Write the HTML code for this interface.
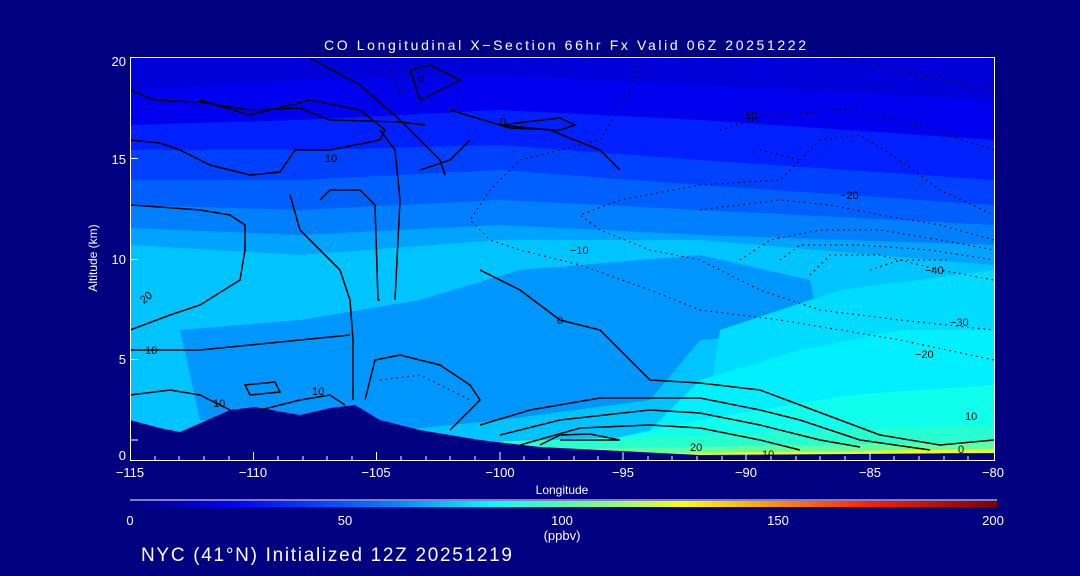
<!DOCTYPE html>
<html><head><meta charset="utf-8"><style>
html,body{margin:0;padding:0;background:#000080;width:1080px;height:576px;overflow:hidden}
svg{display:block}
text{font-family:"Liberation Sans",sans-serif;fill:#fff}
</style></head><body>
<svg width="1080" height="576" viewBox="0 0 1080 576">
<defs>
<clipPath id="pc"><rect x="130" y="57" width="864" height="403"/></clipPath>
<linearGradient id="cb" x1="0" x2="1">
<stop offset="0" stop-color="#000080"/><stop offset="0.12" stop-color="#0000ff"/><stop offset="0.3" stop-color="#0080ff"/><stop offset="0.42" stop-color="#00ffff"/><stop offset="0.55" stop-color="#80ff80"/><stop offset="0.64" stop-color="#ffff00"/><stop offset="0.85" stop-color="#ff2000"/><stop offset="1" stop-color="#800000"/>
</linearGradient>
</defs>
<g clip-path="url(#pc)">
<rect x="130" y="57" width="864" height="403" fill="#0000d8"/>
<path d="M130 90 L300 80 L500 75 L700 85 L994 100 V460 H130Z" fill="#0000f0"/>
<path d="M130 125 L300 120 L500 110 L700 120 L994 140 V460 H130Z" fill="#0020ff"/>
<path d="M130 150 L300 150 L500 145 L700 160 L994 180 V460 H130Z" fill="#0040ff"/>
<path d="M130 180 L300 180 L500 170 L700 185 L994 205 V460 H130Z" fill="#0060ff"/>
<path d="M130 205 L300 210 L500 200 L700 210 L994 225 V460 H130Z" fill="#0080ff"/>
<path d="M130 228 L300 235 L500 225 L700 235 L994 245 V460 H130Z" fill="#00a4ff"/>
<path d="M130 245 L300 255 L500 240 L700 240 L994 265 V460 H130Z" fill="#00c4ff"/>
<path d="M180 330 L300 320 L420 300 L520 270 L700 255 L810 280 L820 330 L700 340 L650 400 L500 420 L400 430 L300 420 L200 420Z" fill="#0096ff"/>
<path d="M700 460 L720 330 L840 290 L994 270 V460Z" fill="#00dcff"/>
<path d="M620 460 L700 380 L800 350 L900 330 L994 330 V460Z" fill="#00f0ff"/>
<path d="M560 450 L700 420 L850 395 L994 385 V460Z" fill="#10ffec"/>
<path d="M480 442 L700 435 L994 425 V460 H480Z" fill="#28ffd0"/>
<path d="M500 450 L994 442 V460 H500Z" fill="#60ffa0"/>
<path d="M520 455 L994 449 V460 H520Z" fill="#e8ff20"/>
<path d="M820 456 H850 V460 H820Z M940 453 H994 V460 H940Z" fill="#ff6000"/>
<path d="M130 420 L160 428 L180 432 L230 410 L255 407 L300 415 L330 408 L355 405 L380 420 L420 430 L480 440 L540 447 L700 455 L994 453 V460 H130Z" fill="#000080"/>
<g fill="none" stroke="#000" stroke-width="1.5">
<path d="M130 90 L155 100 L200 102 L250 110 L300 108 L330 120 L400 122 L425 125"/>
<path d="M308 57 L360 85 L400 120 L440 160 L445 175"/>
<path d="M130 140 L160 143 L180 150 L190 155 L210 165 L250 175 L280 172 L295 150 L330 150 L380 140 L385 130 L360 110 L310 100 L250 115 L200 100"/>
<path d="M130 205 L160 207 L200 210 L230 215 L245 225 L245 250 L240 280 L200 305 L170 315 L130 330"/>
<path d="M290 195 L300 230 L320 250 L340 270 L350 300 L353 340 L353 400"/>
<path d="M320 200 L330 190 L360 190 L375 205 L378 300 L380 300"/>
<path d="M380 130 L395 150 L400 200 L395 300"/>
<path d="M130 350 L200 350 L300 340 L350 335"/>
<path d="M450 110 L500 125 L550 130 L600 150 L620 170"/>
<path d="M420 170 L450 160 L470 140"/>
<path d="M500 125 L560 118 L575 125 L560 130 L510 128Z"/>
<path d="M480 270 L520 290 L560 320 L600 330 L630 360 L650 380 L700 383 L760 390 L800 405 L880 435 L940 445 L994 440"/>
<path d="M480 425 L530 410 L600 398 L700 398 L760 410 L800 420 L860 440 L930 450"/>
<path d="M500 435 L560 420 L650 410 L700 413 L760 425 L820 440 L860 447"/>
<path d="M520 445 L580 428 L650 425 L700 428 L760 440 L800 450"/>
<path d="M540 445 L560 435 L590 434 L620 440 L560 440"/>
<path d="M365 400 L375 360 L400 355 L440 365 L470 385 L480 400 L460 420 L450 430"/>
<path d="M245 385 L275 382 L280 392 L250 395Z"/>
<path d="M130 395 L170 390 L200 395 L230 410"/>
<path d="M260 410 L300 400 L330 395 L345 405"/>
<path d="M410 70 L430 65 L460 80 L420 100Z"/>
</g>
<g fill="none" stroke="#000" stroke-width="1.2" stroke-dasharray="1.5 4">
<path d="M390 70 L400 95 L405 80"/>
<path d="M640 60 L630 90 L600 140 L520 160 L490 190 L470 220 L490 240 L520 250 L580 265 L650 290 L700 310 L780 320 L840 330 L900 340 L994 360"/>
<path d="M720 130 L770 115 L850 110 L900 120 L994 150"/>
<path d="M760 150 L800 160 L780 180 L700 185 L620 200 L580 215 L600 230 L650 250 L700 260 L760 290 L820 310 L900 320 L994 330"/>
<path d="M800 160 L820 140 L860 135 L900 160 L940 190 L994 215"/>
<path d="M700 210 L780 200 L830 205 L880 215 L940 225 L994 240"/>
<path d="M740 260 L770 240 L820 230 L880 230 L940 240 L994 250"/>
<path d="M780 260 L800 245 L860 245 L930 250 L994 260"/>
<path d="M810 275 L830 255 L880 255 L940 270 L994 280"/>
<path d="M870 270 L900 260 L950 260"/>
<path d="M780 50 L850 60 L920 75 L994 90"/>
<path d="M380 380 L420 375 L440 385 L470 400"/>
</g>
<g font-size="11">
<text x="325" y="162" style="fill:#000">10</text>
<text x="140" y="302" style="fill:#000" transform="rotate(-40 145 298)">20</text>
<text x="145" y="354" style="fill:#000">10</text>
<text x="312" y="395" style="fill:#000">10</text>
<text x="213" y="407" style="fill:#000">10</text>
<text x="557" y="324" style="fill:#000">0</text>
<text x="500" y="125" style="fill:#000">0</text>
<text x="418" y="83" style="fill:#000">0</text>
<text x="570" y="254" style="fill:#000">−10</text>
<text x="745" y="119" style="fill:#000">10</text>
<text x="840" y="199" style="fill:#000">−20</text>
<text x="925" y="274" style="fill:#000">−40</text>
<text x="950" y="326" style="fill:#000">−30</text>
<text x="915" y="358" style="fill:#000">−20</text>
<text x="965" y="420" style="fill:#000">10</text>
<text x="690" y="451" style="fill:#000">20</text>
<text x="762" y="458" style="fill:#000">10</text>
<text x="958" y="453" style="fill:#000">0</text>
</g>
</g>
<g stroke="#fff" stroke-width="1" fill="none">
<path d="M130 57.5 H994.5 V460.5 H130.5 V57"/>
</g>
<g stroke="#fff" stroke-width="1">
<path d="M130.5 460 v-8 M155 460 v-4 M179 460 v-4 M204 460 v-4 M229 460 v-4 M253.5 460 v-8 M278 460 v-4 M303 460 v-4 M327 460 v-4 M352 460 v-4 M376.5 460 v-8 M401 460 v-4 M426 460 v-4 M450 460 v-4 M475 460 v-4 M500 460 v-8 M524 460 v-4 M549 460 v-4 M574 460 v-4 M598 460 v-4 M623 460 v-8 M648 460 v-4 M672 460 v-4 M697 460 v-4 M722 460 v-4 M746 460 v-8 M771 460 v-4 M796 460 v-4 M820 460 v-4 M845 460 v-4 M870 460 v-8 M894 460 v-4 M919 460 v-4 M944 460 v-4 M968 460 v-4"/>
<path d="M130 359.5 h8 M130 259.5 h8 M130 158.5 h8 M130 440 h8"/>
</g>
<g font-size="13">
<text x="565" y="50" text-anchor="middle" font-size="14" textLength="482">CO Longitudinal X−Section 66hr  Fx Valid 06Z 20251222</text>
<text x="126" y="66" text-anchor="end">20</text>
<text x="126" y="164" text-anchor="end">15</text>
<text x="126" y="264" text-anchor="end">10</text>
<text x="126" y="364" text-anchor="end">5</text>
<text x="126" y="460" text-anchor="end">0</text>
<text x="97" y="258" text-anchor="middle" font-size="12" transform="rotate(-90 97 258)">Altitude (km)</text>
<text x="130" y="477" text-anchor="middle">−115</text>
<text x="253" y="477" text-anchor="middle">−110</text>
<text x="376" y="477" text-anchor="middle">−105</text>
<text x="500" y="477" text-anchor="middle">−100</text>
<text x="623" y="477" text-anchor="middle">−95</text>
<text x="746" y="477" text-anchor="middle">−90</text>
<text x="870" y="477" text-anchor="middle">−85</text>
<text x="993" y="477" text-anchor="middle">−80</text>
<text x="562" y="494" text-anchor="middle" font-size="12">Longitude</text>
<text x="130" y="525" text-anchor="middle">0</text>
<text x="345" y="525" text-anchor="middle">50</text>
<text x="562" y="525" text-anchor="middle">100</text>
<text x="778" y="525" text-anchor="middle">150</text>
<text x="993" y="525" text-anchor="middle">200</text>
<text x="562" y="540" text-anchor="middle">(ppbv)</text>
<text x="141" y="561" font-size="19" textLength="371">NYC (41°N) Initialized 12Z 20251219</text>
</g>
<rect x="130" y="499.5" width="867" height="1" fill="#fff"/>
<rect x="130" y="501" width="867" height="6" fill="url(#cb)"/>
</svg>
</body></html>
